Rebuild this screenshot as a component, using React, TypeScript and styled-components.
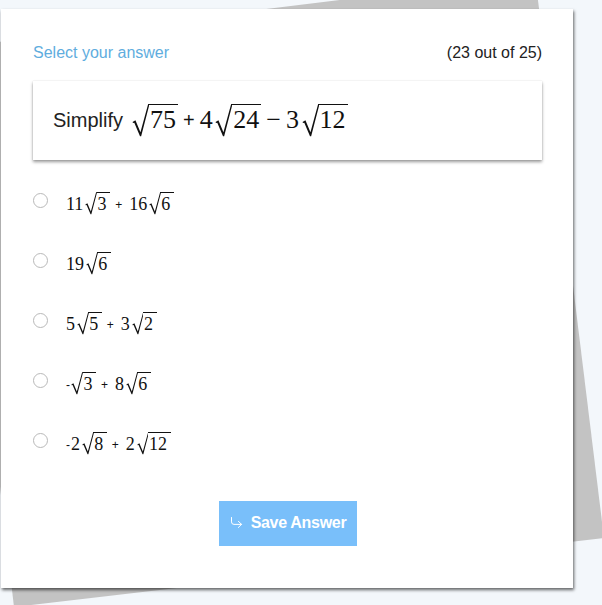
import React from "react";
import styled, { createGlobalStyle } from "styled-components";
import { CornerDownRight } from "lucide-react";

const GlobalStyle = createGlobalStyle`
  html, body {
    margin: 0;
    padding: 0;
    background: #f3f7fb;
    font-family: "Liberation Sans", Arial, sans-serif;
  }
  #root {
    position: relative;
    width: 602px;
    height: 605px;
    overflow: hidden;
  }
`;

const Stage = styled.div`
  position: relative;
  width: 602px;
  height: 605px;
  padding-top: 9px;
  padding-left: 1px;
  box-sizing: border-box;
`;

// the tilted sheet peeking out from behind the card
const BackSheet = styled.div`
  position: absolute;
  inset: 0;
  background: #c3c3c3;
  clip-path: polygon(-51px 48px, 535px -24px, 604px 538px, 14px 607px);
`;

const Card = styled.div`
  position: relative;
  width: 572px;
  height: 579px;
  box-sizing: border-box;
  padding: 35px 31px 0 32px;
  background: #fff;
  box-shadow: 1px 2px 3px rgba(0, 0, 0, 0.6);
  display: flex;
  flex-direction: column;
`;

const Header = styled.div`
  display: flex;
  justify-content: space-between;
  align-items: center;
  height: 18px;
  font-size: 16px;
`;

const Prompt = styled.span`
  color: #5fadde;
`;

const Counter = styled.span`
  color: #222;
`;

const QuestionBox = styled.div`
  margin-top: 19px;
  height: 79px;
  box-sizing: border-box;
  padding-left: 20px;
  display: flex;
  align-items: center;
  background: #fff;
  box-shadow: 0 0 1px rgba(0, 0, 0, 0.15), 0 2px 3px rgba(0, 0, 0, 0.4);
  font-size: 20px;
  color: #222;
`;

const Math = styled.span<{ $size: number; $lead?: number; $drop?: number; $pad: number }>`
  --rad-pad: ${(p) => p.$pad}em;
  display: inline-flex;
  align-items: baseline;
  margin-left: ${(p) => p.$lead ?? 0}px;
  padding-top: ${(p) => p.$drop ?? 0}px;
  font-family: "Liberation Serif", "Times New Roman", serif;
  font-size: ${(p) => p.$size}px;
  line-height: 1;
  color: #111;
`;

const Op = styled.span<{ $size: number; $left: number; $right: number; $serif?: boolean; $lift?: number }>`
  font-family: ${(p) => (p.$serif ? `"Liberation Serif", serif` : `"Liberation Sans", Arial, sans-serif`)};
  font-size: ${(p) => p.$size}px;
  margin: 0 ${(p) => p.$right}px 0 ${(p) => p.$left}px;
  transform: translateY(${(p) => -(p.$lift ?? 0)}px);
`;

const Rad = styled.span<{ $gap: number }>`
  display: inline-flex;
  align-items: flex-start;
  margin-left: ${(p) => p.$gap}em;
`;

const RadSign = styled.svg`
  width: 0.66em;
  height: 1.3em;
  flex-shrink: 0;
  align-self: flex-start;
  display: block;
`;

const Radicand = styled.span`
  align-self: baseline;
  border-top: 1.3px solid #111;
  padding: 0.1em var(--rad-pad) 0 0.05em;
  margin-left: -0.02em;
  line-height: 1;
`;

const OptionList = styled.div`
  margin-top: 12px;
  display: flex;
  flex-direction: column;
`;

const Option = styled.label`
  height: 60px;
  display: flex;
  align-items: center;
  cursor: pointer;
`;

const RadioDot = styled.span`
  width: 15px;
  height: 15px;
  box-sizing: border-box;
  border: 1px solid #b9b9b9;
  border-radius: 50%;
  background: #fff;
  margin-right: 18px;
  position: relative;
  top: -2px;
  flex-shrink: 0;
`;

const ButtonRow = styled.div`
  margin-top: 29px;
  display: flex;
  justify-content: center;
`;

const SaveButton = styled.button`
  width: 138px;
  height: 45px;
  border: none;
  background: #79bffa;
  color: #fff;
  font-family: "Liberation Sans", Arial, sans-serif;
  font-weight: bold;
  font-size: 16px;
  letter-spacing: -0.3px;
  display: flex;
  align-items: center;
  justify-content: center;
  gap: 7px;
  padding: 0 0 2px 0;
`;

function Sqrt({ children, gap }: { children: React.ReactNode; gap: number }) {
  return (
    <Rad $gap={gap}>
      <RadSign viewBox="0 0 12 25.6" preserveAspectRatio="none">
        <path
          d="M0.4 13.6 L2.4 12.4 L5.9 21.4 L11.3 0 L12 0 L12 1.1 L6.4 24.4 L5.6 24.4 L1.6 14.2 L0.7 14.4 Z"
          fill="#111"
        />
      </RadSign>
      <Radicand>{children}</Radicand>
    </Rad>
  );
}

type Term = { coef?: string; rad?: string; op?: string };

type Style = { opSize: number; left: number; right: number; lift: number };

function Expr({ terms, s }: { terms: Term[]; s: Style }) {
  return (
    <>
      {terms.map((t, i) => {
        const minus = t.op === "−";
        const leading = i === 0;
        return (
          <React.Fragment key={i}>
            {t.op && (
              <Op
                $size={minus ? 26 : s.opSize}
                $serif={minus}
                $lift={minus ? 0 : s.lift}
                $left={leading ? 0 : s.left}
                $right={leading ? 1 : s.right}
              >
                {t.op}
              </Op>
            )}
            {t.coef && <span>{t.coef}</span>}
            {t.rad && <Sqrt gap={t.coef ? 0.1 : 0}>{t.rad}</Sqrt>}
          </React.Fragment>
        );
      })}
    </>
  );
}

const options: Term[][] = [
  [{ coef: "11", rad: "3" }, { op: "+", coef: "16", rad: "6" }],
  [{ coef: "19", rad: "6" }],
  [{ coef: "5", rad: "5" }, { op: "+", coef: "3", rad: "2" }],
  [{ op: "-", rad: "3" }, { op: "+", coef: "8", rad: "6" }],
  [{ op: "-", coef: "2", rad: "8" }, { op: "+", coef: "2", rad: "12" }],
];

export default function App() {
  return (
    <>
      <GlobalStyle />
      <Stage>
        <BackSheet />
        <Card>
          <Header>
            <Prompt>Select your answer</Prompt>
            <Counter>(23 out of 25)</Counter>
          </Header>
          <QuestionBox>
            Simplify
            <Math $size={26} $lead={9} $pad={0.08}>
              <Expr
                s={{ opSize: 20, left: 5, right: 5, lift: 1 }}
                terms={[
                  { rad: "75" },
                  { op: "+", coef: "4", rad: "24" },
                  { op: "−", coef: "3", rad: "12" },
                ]}
              />
            </Math>
          </QuestionBox>
          <OptionList>
            {options.map((terms, i) => (
              <Option key={i}>
                <RadioDot />
                <Math $size={18} $drop={4} $pad={0.2}>
                  <Expr s={{ opSize: 12, left: 5, right: 7, lift: 1 }} terms={terms} />
                </Math>
              </Option>
            ))}
          </OptionList>
          <ButtonRow>
            <SaveButton>
              <CornerDownRight size={15} strokeWidth={1.6} />
              Save Answer
            </SaveButton>
          </ButtonRow>
        </Card>
      </Stage>
    </>
  );
}
